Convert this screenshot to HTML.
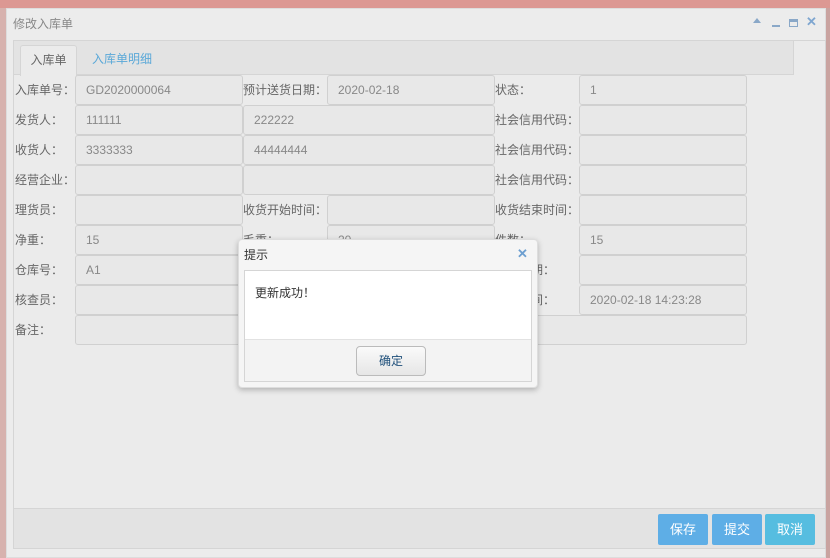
<!DOCTYPE html><html><head><meta charset="utf-8"><style>
*{margin:0;padding:0;box-sizing:border-box}
body{width:830px;height:558px;overflow:hidden;background:#c9a3a0;font-family:"Liberation Sans","Noto Sans CJK SC",sans-serif;font-size:12px;position:relative}
.a{position:absolute}
.top{left:0;top:0;width:830px;height:8px;background:#dc9893}
.win{left:6px;top:8px;width:820px;height:550px;background:#ececec;border:1px solid #ddd}
.lb{position:absolute;color:#666;font-size:12px;line-height:30px;height:30px}
.in{position:absolute;height:30px;background:#e8e8e8;border:1px solid #d0d0d0;border-radius:3px;color:#888;padding-left:10px;line-height:28px}
.btn{position:absolute;top:514px;width:50px;height:31px;color:#fff;font-size:13px;text-align:center;line-height:31px;border-radius:2px}
</style></head><body>
<div class="a top"></div>
<div class="a" style="left:0;top:8px;width:6px;height:550px;background:#d7b2ae"></div>
<div class="a win"></div>
<div class="a" style="left:13px;top:15px;color:#888;font-size:12px">修改入库单</div>
<div class="a" style="left:753px;top:18px;width:0;height:0;border-left:4px solid transparent;border-right:4px solid transparent;border-bottom:5px solid #8aa8c8"></div>
<div class="a" style="left:772px;top:25px;width:8px;height:2px;background:#8aa8c8"></div>
<div class="a" style="left:789px;top:19px;width:9px;height:8px;border:1px solid #8aa8c8;border-top:3px solid #8aa8c8"></div>
<div class="a" style="left:806px;top:14px;color:#7fa6d0;font-size:13px;font-weight:bold">✕</div>
<div class="a" style="left:13px;top:40px;width:813px;height:509px;border:1px solid #d5d5d5;background:#ebebeb"></div>
<div class="a" style="left:14px;top:41px;width:780px;height:34px;background:#e3e3e3;border-bottom:1px solid #d5d5d5;border-right:1px solid #d5d5d5"></div>
<div class="a" style="left:20px;top:45px;width:57px;height:31px;background:#ebebeb;border:1px solid #d5d5d5;border-bottom:none;border-radius:3px 3px 0 0;color:#666;text-align:center;line-height:28px">入库单</div>
<div class="a" style="left:92px;top:45px;color:#5aa8d8;line-height:28px">入库单明细</div>
<div class="a" style="left:14px;top:508px;width:811px;height:40px;background:#e3e3e3;border-top:1px solid #d5d5d5"></div>

<div class="lb" style="left:15px;top:75px">入库单号：</div><div class="in" style="left:75px;top:75px;width:168px">GD2020000064</div>
<div class="lb" style="left:243px;top:75px">预计送货日期：</div><div class="in" style="left:327px;top:75px;width:168px">2020-02-18</div>
<div class="lb" style="left:495px;top:75px">状态：</div><div class="in" style="left:579px;top:75px;width:168px">1</div>

<div class="lb" style="left:15px;top:105px">发货人：</div><div class="in" style="left:75px;top:105px;width:168px">111111</div>
<div class="in" style="left:243px;top:105px;width:252px">222222</div>
<div class="lb" style="left:495px;top:105px">社会信用代码：</div><div class="in" style="left:579px;top:105px;width:168px"></div>

<div class="lb" style="left:15px;top:135px">收货人：</div><div class="in" style="left:75px;top:135px;width:168px">3333333</div>
<div class="in" style="left:243px;top:135px;width:252px">44444444</div>
<div class="lb" style="left:495px;top:135px">社会信用代码：</div><div class="in" style="left:579px;top:135px;width:168px"></div>

<div class="lb" style="left:15px;top:165px">经营企业：</div><div class="in" style="left:75px;top:165px;width:168px"></div>
<div class="in" style="left:243px;top:165px;width:252px"></div>
<div class="lb" style="left:495px;top:165px">社会信用代码：</div><div class="in" style="left:579px;top:165px;width:168px"></div>

<div class="lb" style="left:15px;top:195px">理货员：</div><div class="in" style="left:75px;top:195px;width:168px"></div>
<div class="lb" style="left:243px;top:195px">收货开始时间：</div><div class="in" style="left:327px;top:195px;width:168px"></div>
<div class="lb" style="left:495px;top:195px">收货结束时间：</div><div class="in" style="left:579px;top:195px;width:168px"></div>

<div class="lb" style="left:15px;top:225px">净重：</div><div class="in" style="left:75px;top:225px;width:168px">15</div>
<div class="lb" style="left:243px;top:225px">毛重：</div><div class="in" style="left:327px;top:225px;width:168px">20</div>
<div class="lb" style="left:495px;top:225px">件数：</div><div class="in" style="left:579px;top:225px;width:168px">15</div>

<div class="lb" style="left:15px;top:255px">仓库号：</div><div class="in" style="left:75px;top:255px;width:168px">A1</div>
<div class="in" style="left:327px;top:255px;width:168px"></div>
<div class="lb" style="left:495px;top:255px">创建日期：</div><div class="in" style="left:579px;top:255px;width:168px"></div>

<div class="lb" style="left:15px;top:285px">核查员：</div><div class="in" style="left:75px;top:285px;width:168px"></div>
<div class="in" style="left:327px;top:285px;width:168px"></div>
<div class="lb" style="left:495px;top:285px">创建时间：</div><div class="in" style="left:579px;top:285px;width:168px">2020-02-18 14:23:28</div>

<div class="lb" style="left:15px;top:315px">备注：</div><div class="in" style="left:75px;top:315px;width:672px"></div>

<div class="btn" style="left:658px;background:#5eaee6">保存</div>
<div class="btn" style="left:712px;background:#5eaee6">提交</div>
<div class="btn" style="left:765px;background:#56bde0">取消</div>

<div class="a" style="left:238px;top:239px;width:300px;height:149px;background:#f5f5f5;border:1px solid #ddd;border-radius:4px;box-shadow:0 2px 6px rgba(0,0,0,.25)"></div>
<div class="a" style="left:244px;top:246px;color:#333;font-size:12px">提示</div>
<div class="a" style="left:517px;top:246px;color:#6d9fd0;font-size:13px;font-weight:bold">✕</div>
<div class="a" style="left:244px;top:270px;width:288px;height:112px;border:1px solid #d5d5d5;background:#f3f3f3"></div>
<div class="a" style="left:245px;top:271px;width:286px;height:69px;background:#fff;border-bottom:1px solid #e2e2e2"></div>
<div class="a" style="left:255px;top:284px;color:#333;font-size:12px">更新成功！</div>
<div class="a" style="left:356px;top:346px;width:70px;height:30px;border:1px solid #bbb;border-radius:4px;background:linear-gradient(#fafafa,#e6e6e6);text-align:center;line-height:28px;color:#1e4f7a;font-size:12px">确定</div>
</body></html>
